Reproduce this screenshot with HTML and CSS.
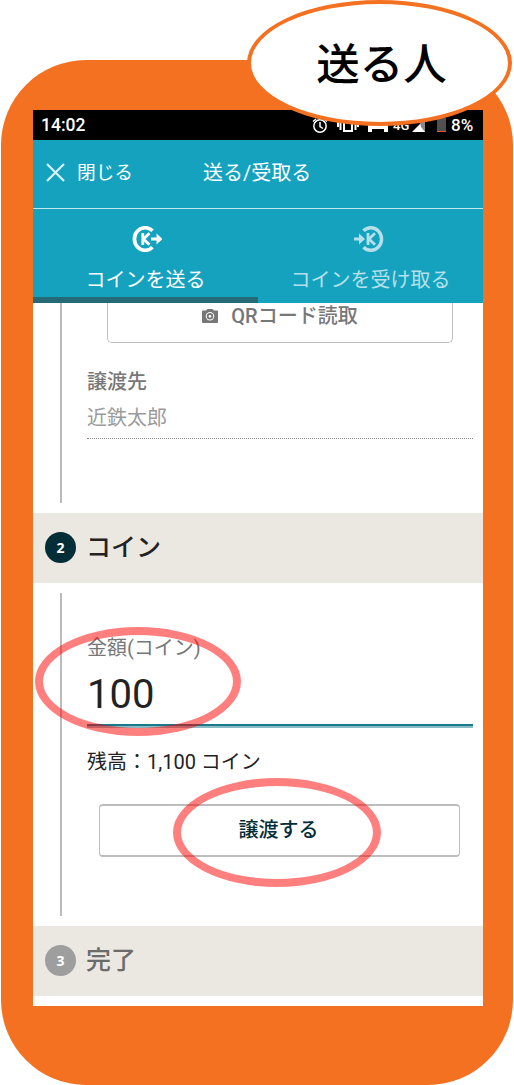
FILE: index.html
```html
<!DOCTYPE html>
<html lang="ja">
<head>
<meta charset="utf-8">
<title>送る/受取る</title>
<link rel="stylesheet" href="styles.css">
</head>
<body>
<main class="phone">
  <div class="screen">
    <div class="status">
      <span class="clock">14:02</span>
      <svg class="status-icons" width="138" height="30" viewBox="0 0 138 30">
        <g fill="none" stroke="#fff" stroke-width="1.5">
          <circle cx="11" cy="16" r="6.2"/>
          <path d="M11 12v4.500l3 2M4 11.500l3-2.500M18 11.500l-3-2.500"/>
        </g>
        <path d="M35 7v14h8V7M31.500 10v10M46.500 10v10M29 12v5M49 12v5" fill="none" stroke="#fff" stroke-width="2"/>
        <path d="M59 8h20v14h-4v-3h-12v3h-4z" fill="#fff"/>
        <text class="network" x="84" y="20">4G</text>
        <path d="M103 22l13-13v13z" fill="#fff"/>
        <path d="M111 12l5-4v14l-4-5z" fill="#888"/>
        <path d="M128 8h9v13h-9z" fill="#505050"/>
        <path d="M128 21h9v1h-9z" fill="#f05a22"/>
      </svg>
      <span class="percent">8%</span>
    </div>
    <header class="header">
      <svg class="close" width="19" height="19" viewBox="0 0 19 19"><path d="M1 1l17 17M18 1L1 18" fill="none" stroke="#d8f1f6" stroke-width="2.200"/></svg>
      <span class="close-label">閉じる</span>
      <h1 class="header-title">送る/受取る</h1>
    </header>
    <nav class="tabs">
      <div class="tab tab-active">
        <svg class="coin" width="30" height="26" viewBox="0 0 30 26">
          <g fill="none" stroke="currentColor">
            <path d="M20.500 4.800A10.700 11.300 0 1 0 20.500 21.200" stroke-width="3.700"/>
            <path d="M10.800 7v12M17.500 7.300l-6 5.700 6 5.700" stroke-width="2.800"/>
            <path d="M19 13h7" stroke-width="3"/>
          </g>
          <path d="M24.500 7.500l6 5.500-6 5.500z" fill="currentColor"/>
        </svg>
        <span>コインを送る</span>
      </div>
      <div class="tab">
        <svg class="coin coin-receive" width="30" height="26" viewBox="0 0 30 26">
          <g fill="none" stroke="currentColor">
            <path d="M9.500 4.800A10.700 11.300 0 1 1 9.500 21.200" stroke-width="3.400"/>
            <path d="M14 7v12M21 7.300l-6 5.700 6 5.700" stroke-width="2.800"/>
            <path d="M0 13h7" stroke-width="3"/>
          </g>
          <path d="M5 7.500l6 5.500-6 5.500z" fill="currentColor"/>
        </svg>
        <span>コインを受け取る</span>
      </div>
    </nav>
    <section class="step step-recipient">
      <div class="qr">
        <svg width="16" height="14" viewBox="0 0 16 14"><path d="M1 1.500h3L5.500 0h5L12 1.500h3q1 0 1 1V13q0 1-1 1H1q-1 0-1-1V2.500q0-1 1-1z" fill="#777"/><circle cx="8" cy="7.300" r="4.200" fill="#fff"/><circle cx="8" cy="7.300" r="2.300" fill="none" stroke="#777" stroke-width="1.800"/></svg>
        <span class="qr-label">QRコード読取</span>
      </div>
      <p class="label recipient-label">譲渡先</p>
      <p class="recipient">近鉄太郎</p>
    </section>
    <h2 class="heading"><span class="number">2</span><span class="heading-text">コイン</span></h2>
    <section class="step step-coin">
      <p class="label">金額(コイン)</p>
      <div class="amount">100</div>
      <p class="balance">残高：1,100 コイン</p>
      <div class="transfer">譲渡する</div>
    </section>
    <h2 class="heading heading-off"><span class="number">3</span><span class="heading-text">完了</span></h2>
  </div>
</main>
<div class="bubble">送る人</div>
<div class="ring ring-amount"></div>
<div class="ring ring-transfer"></div>
</body>
</html>
```
FILE: styles.css
```css
* { box-sizing: border-box; }
body {
  margin: 0;
  padding: 60px 0 0 1px;
  height: 1085px;
  overflow: hidden;
  position: relative;
  background: #fff;
  font-family: Roboto, "Noto Sans CJK JP", sans-serif;
  font-size: 20px;
  line-height: 30px;
}
h1, h2, p { margin: 0; font-weight: 400; font-size: inherit; }
svg { display: block; flex: none; }
.phone {
  width: 512px;
  height: 1025px;
  padding: 50px 30px 79px 32px;
  border-radius: 85px;
  background: #f37121;
}
.screen { height: 896px; background: #fff; overflow: hidden; }
.status {
  display: flex;
  align-items: center;
  height: 30px;
  padding: 0 7px;
  background: #000;
  color: #fff;
  font-size: 17.5px;
  font-weight: 500;
}
.clock { flex: 1; padding-left: 1px; }
.network { font-size: 13px; font-weight: 500; fill: #fff; }
.percent { width: 25px; margin-left: 4px; font-size: 17px; }
.header {
  display: flex;
  align-items: center;
  height: 69px;
  padding: 0 12px 2px 13px;
  border-bottom: 1px solid #c2e8ef;
  background: #15a2bf;
  color: #fff;
}
.close { margin-bottom: 2px; }
.close-label { margin-left: 12px; font-size: 18.7px; }
.header-title { margin-left: 70px; }
.tabs {
  display: flex;
  height: 94px;
  background: #15a2bf;
  color: #b5e0ea;
}
.tab {
  flex: 1;
  display: flex;
  flex-direction: column;
  align-items: center;
  gap: 13px;
  padding-top: 17px;
  border-bottom: 6px solid transparent;
}
.tab-active { color: #fff; border-color: #266977; }
.coin { margin-left: 2px; }
.coin-receive { margin: 0 3px 0 0; }
.step { position: relative; }
.step::before {
  content: "";
  position: absolute;
  left: 27px;
  width: 2px;
  background: #bababa;
}
.step-recipient { height: 210px; padding: 0 10px 0 54px; }
.step-recipient::before { top: 0; bottom: 10px; }
.qr {
  display: flex;
  align-items: center;
  justify-content: center;
  gap: 13px;
  height: 40px;
  margin: 0 20px;
  padding-bottom: 14px;
  border: solid #bfbfbf;
  border-width: 0 1px 1px;
  border-radius: 0 0 5px 5px;
  color: #777;
  font-weight: 500;
}
.qr-label { padding-top: 1px; }
.label { color: #777; }
.recipient-label { margin-top: 24px; font-weight: 500; }
.recipient {
  height: 42px;
  padding-top: 6px;
  border-bottom: 1px dotted #888;
  color: #9b9b9b;
}
.heading {
  display: flex;
  align-items: center;
  gap: 10px;
  height: 70px;
  padding: 0 12px 1px;
  background: #ebe8e1;
  color: #222;
  font-size: 25px;
  font-weight: 500;
}
.number {
  display: flex;
  align-items: center;
  justify-content: center;
  width: 31px;
  height: 31px;
  padding-bottom: 1px;
  border-radius: 50%;
  background: #032e38;
  color: #fff;
  font: 700 14px "Open Sans", sans-serif;
}
.heading-off { color: #6b6b6b; }
.heading-off .number { background: #9e9e9e; }
.step-coin { height: 343px; padding: 50px 10px 0 54px; }
.step-coin::before { top: 10px; bottom: 10px; }
.amount {
  height: 63px;
  border-bottom: 2px solid #18798b;
  box-shadow: 0 2px #8abcc6;
  color: #222;
  font-size: 40px;
  line-height: 63px;
}
.balance { margin-top: 21px; color: #222; }
.transfer {
  display: flex;
  align-items: center;
  justify-content: center;
  height: 53px;
  margin: 27px 13px 0 12px;
  padding: 0 2px 2px 0;
  border: 1px solid #bdbdbd;
  border-width: 2px 1px;
  border-radius: 4px;
  color: #032e38;
  font-weight: 500;
}
.bubble {
  position: absolute;
  left: 247px;
  top: 0;
  display: flex;
  align-items: center;
  justify-content: center;
  width: 265px;
  height: 126px;
  padding: 5px 0 0 4px;
  border: 4px solid #f37121;
  border-radius: 50%;
  background: #fff;
  color: #000;
  font-size: 43.5px;
  font-weight: 500;
}
.ring {
  position: absolute;
  height: 109px;
  border: 8px solid rgba(255, 0, 0, .5);
  border-radius: 50%;
}
.ring-amount { left: 35px; top: 627px; width: 206px; }
.ring-transfer { left: 173px; top: 778px; width: 208px; }
```
